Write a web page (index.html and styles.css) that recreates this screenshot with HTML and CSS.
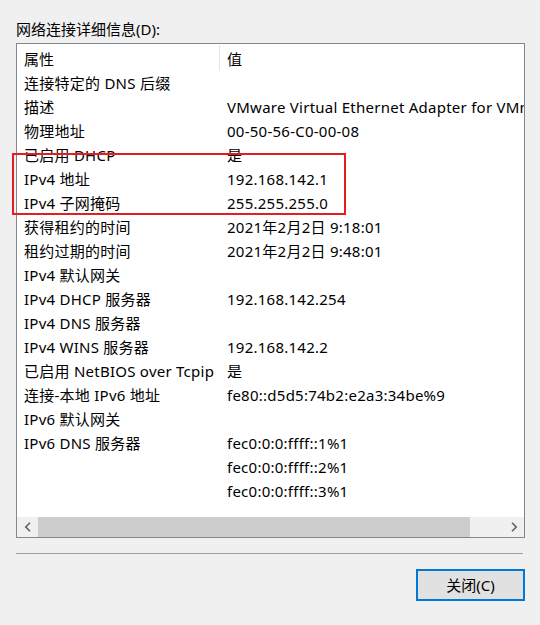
FILE: index.html
```html
<!DOCTYPE html>
<html lang="zh-CN">
<head>
<meta charset="utf-8">
<title>网络连接详细信息</title>
<link rel="stylesheet" href="styles.css">
</head>
<body>
<div class="dialog">
  <div class="title">网络连接详细信息(D):</div>
  <div class="listbox">
    <div class="header">
      <div class="hcell hcell-first">属性</div>
      <div class="hcell">值</div>
    </div>
    <div class="rows">
      <div class="row"><div class="c1">连接特定的 DNS 后缀</div><div class="c2"></div></div>
      <div class="row"><div class="c1">描述</div><div class="c2">VMware Virtual Ethernet Adapter for VMnet1</div></div>
      <div class="row"><div class="c1">物理地址</div><div class="c2">00-50-56-C0-00-08</div></div>
      <div class="row"><div class="c1">已启用 DHCP</div><div class="c2">是</div></div>
      <div class="row"><div class="c1">IPv4 地址</div><div class="c2">192.168.142.1</div></div>
      <div class="row"><div class="c1">IPv4 子网掩码</div><div class="c2">255.255.255.0</div></div>
      <div class="row"><div class="c1">获得租约的时间</div><div class="c2">2021年2月2日 9:18:01</div></div>
      <div class="row"><div class="c1">租约过期的时间</div><div class="c2">2021年2月2日 9:48:01</div></div>
      <div class="row"><div class="c1">IPv4 默认网关</div><div class="c2"></div></div>
      <div class="row"><div class="c1">IPv4 DHCP 服务器</div><div class="c2">192.168.142.254</div></div>
      <div class="row"><div class="c1">IPv4 DNS 服务器</div><div class="c2"></div></div>
      <div class="row"><div class="c1">IPv4 WINS 服务器</div><div class="c2">192.168.142.2</div></div>
      <div class="row"><div class="c1">已启用 NetBIOS over Tcpip</div><div class="c2">是</div></div>
      <div class="row"><div class="c1">连接-本地 IPv6 地址</div><div class="c2">fe80::d5d5:74b2:e2a3:34be%9</div></div>
      <div class="row"><div class="c1">IPv6 默认网关</div><div class="c2"></div></div>
      <div class="row"><div class="c1">IPv6 DNS 服务器</div><div class="c2">fec0:0:0:ffff::1%1</div></div>
      <div class="row"><div class="c1"></div><div class="c2">fec0:0:0:ffff::2%1</div></div>
      <div class="row"><div class="c1"></div><div class="c2">fec0:0:0:ffff::3%1</div></div>
    </div>
    <div class="hscroll">
      <div class="sbtn">
        <svg width="8" height="10" viewBox="0 0 8 10"><path d="M6 0.8 L1.8 5 L6 9.2" fill="none" stroke="#606060" stroke-width="1.6"/></svg>
      </div>
      <div class="track"><div class="thumb"></div></div>
      <div class="sbtn">
        <svg width="8" height="10" viewBox="0 0 8 10"><path d="M2 0.8 L6.2 5 L2 9.2" fill="none" stroke="#606060" stroke-width="1.6"/></svg>
      </div>
    </div>
  </div>
  <div class="separator"></div>
  <div class="actions">
    <button class="btn">关闭(C)</button>
  </div>
</div>
<div class="highlight"></div>
</body>
</html>
```

FILE: styles.css
```css
* {
  box-sizing: border-box;
}

html, body {
  margin: 0;
  padding: 0;
  background: #f0f0f0;
}

body {
  width: 540px;
  height: 625px;
  position: relative;
  font-family: "Noto Sans", "Noto Sans CJK SC", sans-serif;
  font-size: 15px;
  color: #000;
  overflow: hidden;
}

.dialog {
  padding: 19px 0 0 16px;
}

.title {
  height: 20px;
  line-height: 20px;
  white-space: nowrap;
}

.listbox {
  margin-top: 4px;
  width: 509px;
  height: 495px;
  border: 1px solid #828790;
  background: #fff;
  display: flex;
  flex-direction: column;
}

.header {
  display: flex;
  height: 27px;
  flex: none;
  padding-top: 1px;
}

.hcell {
  line-height: 28px;
  padding-left: 7px;
  white-space: nowrap;
}

.hcell-first {
  width: 203px;
  border-right: 1px solid #e5e5e5;
  height: 26px;
}

.rows {
  flex: 1;
  overflow: hidden;
}

.row {
  display: grid;
  grid-template-columns: 203px 1fr;
  height: 24px;
  line-height: 24px;
  letter-spacing: 0.25px;
}

.c1, .c2 {
  padding-left: 7px;
  white-space: nowrap;
  overflow: hidden;
}

.hscroll {
  flex: none;
  height: 20px;
  display: flex;
  background: #f0f0f0;
}

.sbtn {
  width: 21px;
  display: flex;
  align-items: center;
  justify-content: center;
}

.track {
  flex: 1;
  display: flex;
}

.thumb {
  width: 432px;
  background: #cdcdcd;
}

.separator {
  width: 507px;
  margin-top: 15px;
  height: 1px;
  background: #a0a0a0;
}

.actions {
  display: flex;
  justify-content: flex-end;
  padding-right: 15px;
  padding-top: 15px;
}

.btn {
  width: 109px;
  height: 32px;
  border: 2px solid #0078d7;
  background: #e1e1e1;
  font-family: "Noto Sans", "Noto Sans CJK SC", sans-serif;
  font-size: 15px;
  color: #000;
  padding: 0;
  line-height: 26px;
}

.highlight {
  position: absolute;
  left: 12px;
  top: 153px;
  width: 334px;
  height: 62px;
  border: 2px solid #e51c23;
}
```
